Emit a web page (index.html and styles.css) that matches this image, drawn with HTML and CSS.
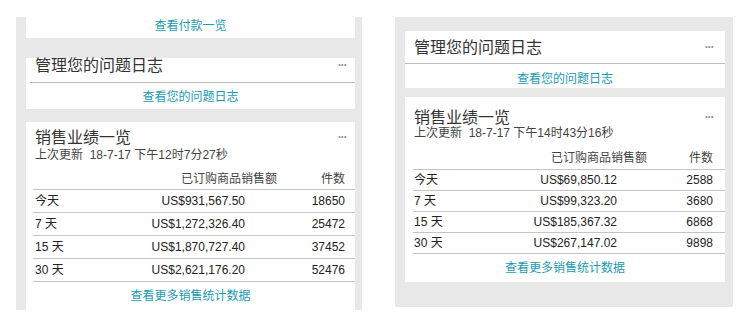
FILE: index.html
```html
<!DOCTYPE html>
<html lang="zh-CN">
<head>
    <meta charset="UTF-8">
    <meta name="viewport" content="width=device-width, initial-scale=1.0">
    <title>销售业绩一览</title>
    <link rel="stylesheet" href="styles.css">
</head>
<body>
<div class="page">

    <div class="panel panel-a">
        <div class="card card-pay">
            <a class="more" href="#">查看付款一览</a>
        </div>

        <div class="card card-log">
            <div class="card-head">
                <span class="title">管理您的问题日志</span>
                <span class="dots">•••</span>
            </div>
            <a class="more" href="#">查看您的问题日志</a>
        </div>

        <div class="card card-sales">
            <div class="card-head plain">
                <span class="title">销售业绩一览</span>
                <span class="dots">•••</span>
            </div>
            <div class="updated">上次更新&nbsp; 18-7-17 下午12时7分27秒</div>
            <div class="stats">
                <div class="row head">
                    <span class="label"></span>
                    <span class="amount">已订购商品销售额</span>
                    <span class="count">件数</span>
                </div>
                <div class="row">
                    <span class="label">今天</span>
                    <span class="amount">US$931,567.50</span>
                    <span class="count">18650</span>
                </div>
                <div class="row">
                    <span class="label">7 天</span>
                    <span class="amount">US$1,272,326.40</span>
                    <span class="count">25472</span>
                </div>
                <div class="row">
                    <span class="label">15 天</span>
                    <span class="amount">US$1,870,727.40</span>
                    <span class="count">37452</span>
                </div>
                <div class="row">
                    <span class="label">30 天</span>
                    <span class="amount">US$2,621,176.20</span>
                    <span class="count">52476</span>
                </div>
            </div>
            <a class="more" href="#">查看更多销售统计数据</a>
        </div>
    </div>

    <div class="panel panel-b">
        <div class="card card-log">
            <div class="card-head">
                <span class="title">管理您的问题日志</span>
                <span class="dots">•••</span>
            </div>
            <a class="more" href="#">查看您的问题日志</a>
        </div>

        <div class="card card-sales">
            <div class="card-head plain">
                <span class="title">销售业绩一览</span>
                <span class="dots">•••</span>
            </div>
            <div class="updated">上次更新&nbsp; 18-7-17 下午14时43分16秒</div>
            <div class="stats">
                <div class="row head">
                    <span class="label"></span>
                    <span class="amount">已订购商品销售额</span>
                    <span class="count">件数</span>
                </div>
                <div class="row">
                    <span class="label">今天</span>
                    <span class="amount">US$69,850.12</span>
                    <span class="count">2588</span>
                </div>
                <div class="row">
                    <span class="label">7 天</span>
                    <span class="amount">US$99,323.20</span>
                    <span class="count">3680</span>
                </div>
                <div class="row">
                    <span class="label">15 天</span>
                    <span class="amount">US$185,367.32</span>
                    <span class="count">6868</span>
                </div>
                <div class="row">
                    <span class="label">30 天</span>
                    <span class="amount">US$267,147.02</span>
                    <span class="count">9898</span>
                </div>
            </div>
            <a class="more" href="#">查看更多销售统计数据</a>
        </div>
    </div>

</div>
</body>
</html>
```

FILE: styles.css
```css
body {
    margin: 0;
    background: #fff;
    font-family: "Liberation Sans", "Noto Sans CJK SC", sans-serif;
    color: #222;
}
.page {
    display: flex;
    align-items: flex-start;
    gap: 33px;
    padding-left: 16px;
}
.panel {
    display: flex;
    flex-direction: column;
    background: #e8e8e8;
    margin-top: 17px;
}
.card {
    background: #fff;
    display: flex;
    flex-direction: column;
}
.more {
    display: block;
    text-align: center;
    color: #1a9bb0;
    text-decoration: none;
    font-size: 12px;
    line-height: 18px;
}
.card-head {
    display: flex;
    justify-content: space-between;
    align-items: center;
    border-bottom: 1px solid #bdbdbd;
}
.card-head.plain {
    border-bottom: none;
}
.title {
    font-size: 16px;
    line-height: 16px;
    color: #333;
}
.dots {
    font-size: 7px;
    letter-spacing: 0.5px;
    color: #8a8a8a;
    align-self: flex-start;
    padding-top: 3px;
}
.updated {
    font-size: 12px;
    line-height: 14px;
    color: #444;
}
.stats {
    font-size: 12px;
}
.row {
    display: flex;
    border-bottom: 1px solid #c4c4c4;
}
.row .label {
    flex: 1;
}
.row .amount,
.row .count {
    text-align: right;
}
.row.head {
    color: #444;
}

/* left screenshot */
.panel-a {
    width: 346px;
    height: 293px;
    overflow: hidden;
    box-sizing: border-box;
    padding: 0 7px 0 10px;
}
.panel-a .card-pay {
    height: 21px;
}
.panel-a .card-log {
    margin-top: 20px;
}
.panel-a .card-log .card-head {
    padding: 0 8px 8px 5px;
    margin-left: 4px;
}
.panel-a .card-log .more {
    padding: 5px 0 3px;
}
.panel-a .card-sales {
    margin-top: 13px;
    flex: 1;
}
.panel-a .card-sales .card-head {
    padding: 8px 8px 0 9px;
}
.panel-a .updated {
    padding: 2px 0 0 9px;
}
.panel-a .stats {
    margin: 8px 0 0 7px;
}
.panel-a .row {
    line-height: 22px;
    padding: 0 10px 0 2px;
}
.panel-a .row .count {
    width: 100px;
}
.panel-a .row.head {
    line-height: 19px;
}
.panel-a .row.head .count {
    width: 68px;
}
.panel-a .card-sales .more {
    padding-top: 5px;
}

/* right screenshot */
.panel-b {
    width: 338px;
    box-sizing: border-box;
    padding: 14px 8px 25px 10px;
}
.panel-b .card-log .card-head {
    padding: 9px 11px 7px 9px;
}
.panel-b .card-log .more {
    padding-top: 6px;
}
.panel-b .card-sales {
    margin-top: 9px;
}
.panel-b .card-sales .card-head {
    padding: 13px 11px 0 9px;
}
.panel-b .updated {
    padding-left: 9px;
}
.panel-b .stats {
    margin: 7px 0 0 8px;
}
.panel-b .row {
    line-height: 20px;
    padding: 0 12px 0 1px;
}
.panel-b .row .count {
    width: 96px;
}
.panel-b .row.head {
    line-height: 22px;
}
.panel-b .row.head .count {
    width: 66px;
}
.panel-b .card-sales .more {
    padding: 5px 0 5px;
}
```
